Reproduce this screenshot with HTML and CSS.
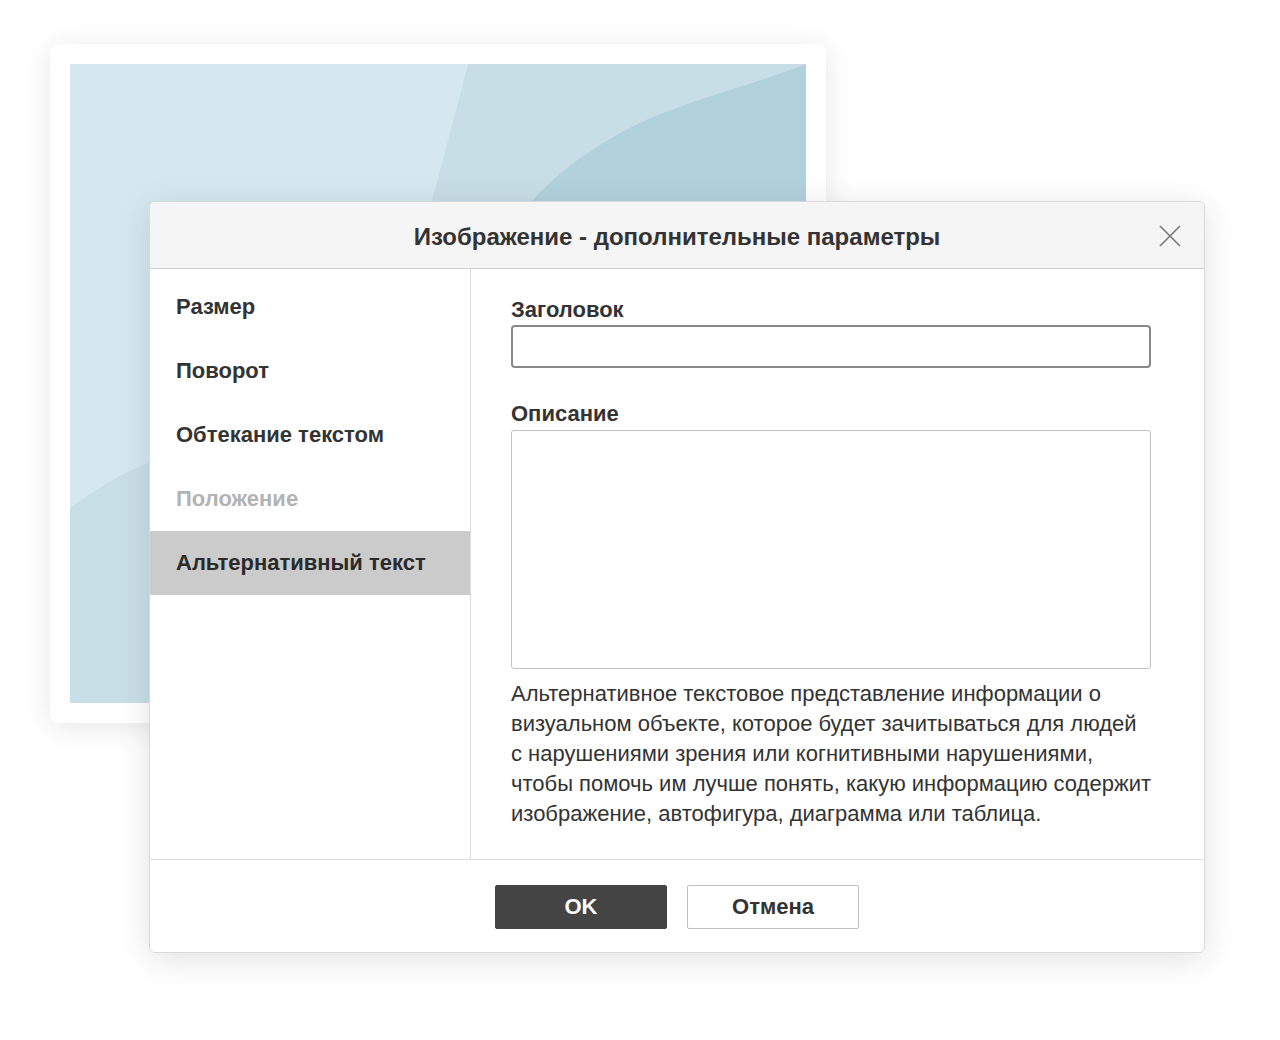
FILE: index.html
```html
<!DOCTYPE html>
<html lang="ru">
<head>
<meta charset="utf-8">
<title>Изображение - дополнительные параметры</title>
<link rel="stylesheet" href="styles.css">
</head>
<body>
<div class="stage">
  <div class="card">
    <svg class="picture" viewBox="0 0 736 639" width="736" height="639" aria-hidden="true">
      <rect width="736" height="639" fill="#d6e8ef"/>
      <path d="M398 0 L736 0 L736 639 L300 639 L362 137 Z" fill="#c8dee6"/>
      <path d="M736 0 C 670 26, 600 40, 545 72 C 505 95, 482 115, 462 137 C 420 190, 400 260, 380 639 L736 639 Z" fill="#b1d1dd"/>
      <path d="M0 444 C 30 422, 60 404, 100 390 L 100 639 L 0 639 Z" fill="#c9dfe7"/>
    </svg>
  </div>
  <div class="dialog">
    <div class="dlg-header">
      <h1 class="dlg-title">Изображение - дополнительные параметры</h1>
      <button class="dlg-close" aria-label="Закрыть">
        <svg width="24" height="24" viewBox="0 0 24 24"><path d="M2 2 L22 22 M22 2 L2 22" stroke="#777" stroke-width="1.6" fill="none"/></svg>
      </button>
    </div>
    <div class="dlg-body">
      <nav class="dlg-nav">
        <div class="nav-item">Размер</div>
        <div class="nav-item">Поворот</div>
        <div class="nav-item">Обтекание текстом</div>
        <div class="nav-item disabled">Положение</div>
        <div class="nav-item active">Альтернативный текст</div>
      </nav>
      <div class="dlg-content">
        <label class="field-label">Заголовок</label>
        <div class="input"></div>
        <label class="field-label second">Описание</label>
        <div class="textarea"></div>
        <p class="hint">Альтернативное текстовое представление информации о визуальном объекте, которое будет зачитываться для людей с нарушениями зрения или когнитивными нарушениями, чтобы помочь им лучше понять, какую информацию содержит изображение, автофигура, диаграмма или таблица.</p>
      </div>
    </div>
    <div class="dlg-footer">
      <button class="btn primary">OK</button>
      <button class="btn">Отмена</button>
    </div>
  </div>
</div>
</body>
</html>
```
FILE: styles.css
```css
html, body {
  margin: 0;
  padding: 0;
  background: #ffffff;
}
body {
  width: 1280px;
  height: 1040px;
  overflow: hidden;
  font-family: "Liberation Sans", Arial, sans-serif;
  color: #333;
}
.stage {
  display: grid;
  width: 1280px;
  height: 1040px;
}
.card {
  grid-area: 1 / 1;
  align-self: start;
  justify-self: start;
  margin: 44px 0 0 50px;
  width: 736px;
  height: 639px;
  padding: 20px;
  background: #fff;
  border-radius: 8px;
  box-shadow: 0 4px 28px rgba(0, 0, 0, 0.1);
}
.picture {
  display: block;
}
.dialog {
  grid-area: 1 / 1;
  align-self: start;
  justify-self: start;
  margin: 201px 0 0 149px;
  width: 1054px;
  height: 750px;
  background: #fff;
  border: 1px solid #d9d9d9;
  border-radius: 6px;
  box-shadow: 0 6px 32px rgba(0, 0, 0, 0.12);
  display: flex;
  flex-direction: column;
  overflow: hidden;
}
.dlg-header {
  height: 66px;
  flex: none;
  background: #f5f5f5;
  border-bottom: 1px solid #d2d2d2;
  display: flex;
  align-items: center;
  justify-content: center;
  position: relative;
}
.dlg-title {
  margin: 4px 0 0 0;
  font-size: 24px;
  font-weight: bold;
  color: #333;
}
.dlg-close {
  position: absolute;
  right: 22px;
  top: 22px;
  width: 24px;
  height: 24px;
  padding: 0;
  border: 0;
  background: none;
}
.dlg-close svg {
  display: block;
}
.dlg-body {
  flex: 1;
  display: flex;
  min-height: 0;
}
.dlg-nav {
  width: 320px;
  flex: none;
  border-right: 1px solid #dcdcdc;
  padding-top: 6px;
}
.nav-item {
  height: 64px;
  line-height: 64px;
  padding-left: 26px;
  font-size: 22px;
  font-weight: bold;
  color: #333;
}
.nav-item.disabled {
  color: #b3b3b3;
}
.nav-item.active {
  background: #cbcbcb;
  color: #2a2a2a;
}
.dlg-content {
  flex: 1;
  padding: 28px 0 0 40px;
  display: flex;
  flex-direction: column;
  align-items: flex-start;
}
.field-label {
  display: block;
  font-size: 22px;
  font-weight: bold;
  line-height: 26px;
  color: #333;
}
.field-label.second {
  margin-top: 33px;
}
.input {
  margin-top: 2px;
  width: 636px;
  height: 39px;
  border: 2px solid #888;
  border-radius: 4px;
}
.textarea {
  margin-top: 3px;
  width: 638px;
  height: 237px;
  border: 1px solid #c2c2c2;
  border-radius: 3px;
}
.hint {
  margin: 10px 0 0 0;
  width: 640px;
  font-size: 22px;
  line-height: 30px;
  color: #333;
}
.dlg-footer {
  flex: none;
  height: 93px;
  border-top: 1px solid #dcdcdc;
  display: flex;
  justify-content: center;
  align-items: flex-start;
  gap: 20px;
  padding-top: 25px;
  box-sizing: border-box;
}
.btn {
  width: 172px;
  height: 44px;
  border: 1px solid #c0c0c0;
  border-radius: 2px;
  background: #fff;
  font-family: "Liberation Sans", Arial, sans-serif;
  font-size: 22px;
  font-weight: bold;
  color: #333;
  padding: 0;
}
.btn.primary {
  background: #444;
  border-color: #444;
  color: #fff;
}
```
